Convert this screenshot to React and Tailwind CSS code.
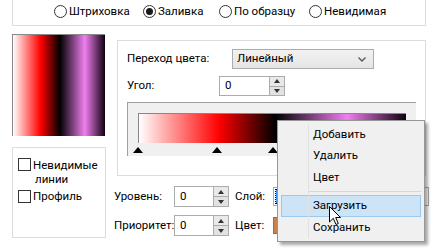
const font = "font-['Roboto','Noto_Sans','Liberation_Sans',sans-serif]";

function Radio({ checked, label, w }) {
  return (
    <div className={`flex items-center gap-[2px] ${w}`}>
      <div className="w-[13px] h-[13px] rounded-full border border-[#333] bg-white flex items-center justify-center shrink-0">
        {checked && <div className="w-[7px] h-[7px] rounded-full bg-[#1a1a1a]" />}
      </div>
      <span>{label}</span>
    </div>
  );
}

function Checkbox() {
  return <div className="w-[13px] h-[13px] border border-[#333] bg-white shrink-0" />;
}

function SpinButtons() {
  return (
    <div className="w-[15px] h-full flex flex-col border-l border-[#acacac]">
      <div className="flex-1 bg-[#e9e9e9] border-b border-[#acacac] flex items-center justify-center">
        <div className="w-0 h-0 border-l-[3px] border-r-[3px] border-b-[4px] border-l-transparent border-r-transparent border-b-[#333]" />
      </div>
      <div className="flex-1 bg-[#e2e2e2] flex items-center justify-center">
        <div className="w-0 h-0 border-l-[3px] border-r-[3px] border-t-[4px] border-l-transparent border-r-transparent border-t-[#333]" />
      </div>
    </div>
  );
}

function SpinBox({ w, h }) {
  return (
    <div className={`flex border border-[#acacac] bg-white shrink-0 ${w} ${h}`}>
      <div className="flex-1 pl-[5px] flex items-center">0</div>
      <SpinButtons />
    </div>
  );
}

function Stop() {
  return <div className="w-0 h-0 border-l-[5px] border-r-[5px] border-b-[6px] border-l-transparent border-r-transparent border-b-black" />;
}

const grad = "bg-[linear-gradient(to_right,#ffffff_0%,#ff0000_30%,#000000_51%,#f07ff0_78%,#100010_100%)]";

export default function App() {
  return (
    <div className={`relative w-[438px] h-[248px] bg-white overflow-hidden text-[11.5px] leading-none text-black whitespace-nowrap ${font}`}>
      {/* top group */}
      <div className="ml-[12px] w-[414px] h-[26px] border-x border-b border-[#dcdcdc] flex items-center pb-[2px]">
        <div className="flex items-center pl-[41px]">
          <Radio w="w-[89px]" label="Штриховка" />
          <Radio w="w-[76px]" checked label="Заливка" />
          <Radio w="w-[90px]" label="По образцу" />
          <Radio w="w-[80px]" label="Невидимая" />
        </div>
      </div>

      <div className="flex">
        {/* left column */}
        <div className="ml-[12px] w-[94px] flex flex-col">
          <div className={`mt-[8px] h-[102px] w-[93px] border-t border-l border-[#888] ${grad}`} />
          <div className="mt-[11px] h-[91px] border border-[#dcdcdc] pt-[10px] pl-[5px] flex flex-col">
            <div className="flex items-start gap-[2px]">
              <Checkbox />
              <div className="leading-[14px]">
                <div>Невидимые</div>
                <div className="pl-[2px]">линии</div>
              </div>
            </div>
            <div className="flex items-center gap-[2px] mt-[4px]">
              <Checkbox />
              <span>Профиль</span>
            </div>
          </div>
        </div>

        {/* right column */}
        <div className="flex flex-col">
          <div className="ml-[11px] mt-[14px] w-[309px] h-[136px] border border-[#dcdcdc] pl-[9px] pt-[8px]">
            <div className="flex items-center h-[20px]">
              <span className="w-[105px]">Переход цвета:</span>
              <div className="w-[142px] h-[20px] border border-[#acacac] bg-[linear-gradient(#f2f2f2,#e5e5e5)] flex items-center pl-[4px] pr-[7px] justify-between">
                <span>Линейный</span>
                <svg width="8" height="5" viewBox="0 0 8 5"><path d="M0.5 0.5 L4 4 L7.5 0.5" fill="none" stroke="#555" strokeWidth="1.3" /></svg>
              </div>
            </div>
            <div className="flex items-center h-[20px] mt-[7px]">
              <span className="w-[92px]">Угол:</span>
              <SpinBox w="w-[66px]" h="h-[20px]" />
            </div>
            <div className="mt-[6px] w-[289px] h-[54px] border-t border-l border-[#a0a0a0] bg-[#f0f0f0] pl-[10px] pt-[10px]">
              <div className={`w-[268px] h-[30px] border-t border-l border-[#888] ${grad}`} />
              <div className="relative h-[8px] mt-[4px] w-[268px]">
                <div className="absolute left-[-5px] top-0"><Stop /></div>
                <div className="absolute left-[74px] top-0"><Stop /></div>
                <div className="absolute left-[130px] top-0"><Stop /></div>
                <div className="absolute left-[205px] top-0"><Stop /></div>
                <div className="absolute left-[263px] top-0"><Stop /></div>
              </div>
            </div>
          </div>

          <div className="mt-[10px] ml-[8px] flex flex-col gap-[8px]">
            <div className="flex items-center h-[21px]">
              <span className="w-[60px] shrink-0">Уровень:</span>
              <SpinBox w="w-[55px]" h="h-[21px]" />
              <span className="ml-[6px] w-[38px] shrink-0">Слой:</span>
              <div className="w-[156px] h-[19px] border border-[#acacac] bg-white p-[2px] shrink-0">
                <div className="w-[10px] h-full bg-[#3399ff] outline-1 outline-dotted outline-black" />
              </div>
            </div>
            <div className="flex items-center h-[21px]">
              <span className="w-[60px] shrink-0">Приоритет:</span>
              <SpinBox w="w-[55px]" h="h-[21px]" />
              <span className="ml-[6px] w-[38px] shrink-0">Цвет:</span>
              <div className="w-[40px] h-[17px] border border-[#777] bg-[#c8844c] shrink-0" />
            </div>
          </div>
        </div>
      </div>

      {/* context menu */}
      <div className="absolute left-[277px] top-[120px] w-[148px] h-[122px] bg-[#f0f0f0] border border-[#979797] shadow-[3px_3px_3px_rgba(0,0,0,0.35)] py-[3px] px-[3px] flex flex-col">
        <div className="absolute left-[30px] top-[3px] bottom-[3px] w-px bg-[#e2e2e2]" />
        <div className="h-[22px] flex items-center pl-[32px]">Добавить</div>
        <div className="h-[22px] flex items-center pl-[32px]">Удалить</div>
        <div className="h-[22px] flex items-center pl-[32px]">Цвет</div>
        <div className="h-[7px] flex items-center pl-[28px]"><div className="h-px w-full bg-[#d7d7d7]" /></div>
        <div className="h-[22px] flex items-center pl-[31px] bg-[#cde4f7] border border-[#99c9ef]">Загрузить</div>
        <div className="h-[22px] flex items-center pl-[32px]">Сохранить</div>
      </div>

      {/* cursor */}
      <svg className="absolute left-[329px] top-[206px]" width="13" height="20" viewBox="0 0 13 20">
        <path d="M0.5 0.5 L0.5 16 L4.3 12.3 L7 18.5 L9.3 17.5 L6.7 11.5 L11.5 11.5 Z" fill="white" stroke="black" strokeWidth="1" />
      </svg>
    </div>
  );
}
